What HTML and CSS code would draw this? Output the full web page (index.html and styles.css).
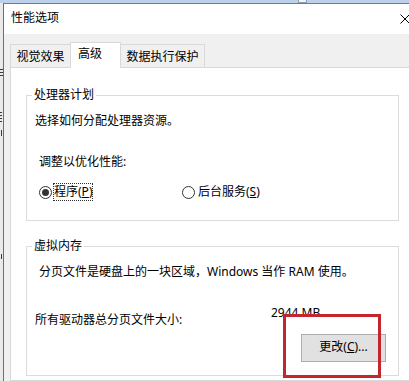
FILE: index.html
```html
<!DOCTYPE html>
<html lang="zh-CN">
<head>
<meta charset="utf-8">
<title>性能选项</title>
<link rel="stylesheet" href="styles.css">
</head>
<body>
<div class="desktop">
  <div class="bg-top"><span class="bg-thumb"></span></div>
  <div class="bg-row">
    <div class="bg-left">
      <span class="mark mark1"></span>
      <span class="mark mark2"></span>
      <span class="mark mark3"></span>
      <span class="mark mark4"></span>
    </div>
    <div class="dialog">
      <div class="titlebar">
        <span class="title">性能选项</span>
        <span class="close"><svg width="9" height="10" viewBox="0 0 9 10"><path d="M0.5 0.5L9.5 9.5M9.5 0.5L0.5 9.5" stroke="#000" stroke-width="1" fill="none"/></svg></span>
      </div>
      <div class="face">
        <div class="tabs">
          <div class="tab tab-first">视觉效果</div>
          <div class="tab tab-active">高级</div>
          <div class="tab tab-last">数据执行保护</div>
        </div>
        <div class="panel">
          <fieldset class="group group-cpu">
            <legend>处理器计划</legend>
            <p class="desc">选择如何分配处理器资源。</p>
            <p class="sub">调整以优化性能:</p>
            <div class="radios">
              <label class="radio-opt opt-program"><span class="radio checked"></span><span class="focus">程序(<u>P</u>)</span></label>
              <label class="radio-opt opt-service"><span class="radio"></span><span class="radio-text">后台服务(<u>S</u>)</span></label>
            </div>
          </fieldset>
          <fieldset class="group group-mem">
            <legend>虚拟内存</legend>
            <p class="desc2">分页文件是硬盘上的一块区域，Windows 当作 RAM 使用。</p>
            <div class="size-row"><span class="size-label">所有驱动器总分页文件大小:</span><span class="size-val">2944 MB</span></div>
            <div class="btn-row"><button class="btn">更改(<u>C</u>)...</button></div>
          </fieldset>
        </div>
      </div>
    </div>
  </div>
  <div class="highlight"></div>
</div>
</body>
</html>
```
FILE: styles.css
```css
* { box-sizing: border-box; }
html, body { margin: 0; padding: 0; }
body {
  width: 409px;
  height: 381px;
  overflow: hidden;
  background: #ececec;
  font-family: "Noto Sans", "Noto Sans CJK SC", sans-serif;
  font-size: 12px;
  line-height: 16px;
  color: #000;
}
.desktop { position: relative; width: 409px; height: 381px; overflow: hidden; }

.bg-top { height: 3px; background: #bcd0e9; display: flex; }
.bg-thumb { margin-left: 298px; width: 9px; height: 3px; background: #f2f4f7; border: 1px solid #8b9cb3; border-top: 0; }

.bg-row { display: flex; height: 378px; }
.bg-left { width: 3px; background: #eaeaea; display: flex; flex-direction: column; align-items: flex-start; }
.mark { display: block; background: #3a3a3a; }
.mark1 { width: 3px; height: 1px; margin-top: 66px; box-shadow: 0 3px 0 #3a3a3a, 0 6px 0 #3a3a3a; }
.mark2 { width: 2px; height: 1px; margin-top: 42px; box-shadow: 0 3px 0 #3a3a3a, 0 6px 0 #3a3a3a, 0 9px 0 #3a3a3a; }
.mark3 { width: 1px; height: 6px; margin-top: 17px; margin-left: 1px; }
.mark4 { width: 1px; height: 5px; margin-top: 118px; margin-left: 1px; }

.dialog {
  width: 406px;
  overflow: hidden;
  border-left: 1px solid #6e6e6e;
  border-top: 1px solid #6b7d96;
  background: #f0f0f0;
  display: flex;
  flex-direction: column;
}
.titlebar {
  height: 30px;
  background: #fff;
  display: flex;
  align-items: center;
  justify-content: space-between;
}
.title { padding-left: 7px; padding-bottom: 2px; }
.close { width: 9px; height: 30px; display: flex; align-items: center; }
.close svg { display: block; margin-top: -1px; }

.face { padding: 8px 0 0 6px; flex: 1; display: flex; flex-direction: column; }
.tabs { display: flex; align-items: flex-end; height: 25px; }
.tab {
  height: 23px;
  background: #f0f0f0;
  border-top: 1px solid #d9d9d9;
  display: flex;
  align-items: center;
  justify-content: center;
  padding-top: 1px;
}
.tab-first { width: 60px; border-left: 1px solid #d9d9d9; }
.tab-active {
  width: 51px;
  height: 26px;
  margin-bottom: -1px;
  background: #fff;
  border: 1px solid #d9d9d9;
  border-bottom: 0;
  position: relative;
  z-index: 1;
  align-items: flex-start;
  justify-content: flex-start;
  padding: 3px 0 0 7px;
}
.tab-last { width: 84px; border-right: 1px solid #d9d9d9; }

.panel {
  flex: 1;
  background: #fff;
  border: 1px solid #d9d9d9;
  border-right: 0;
  padding: 20px 0 0 15px;
}
.group {
  margin: 0;
  width: 373px;
  min-width: 0;
  border: 1px solid #dcdcdc;
  padding: 0 0 0 8px;
}
.group legend { padding: 0 2px; margin-left: -3px; line-height: 14px; }
.group-cpu { padding-bottom: 19px; }
.group-mem { margin-top: 18px; padding-bottom: 13px; }

p { margin: 0; }
.desc { margin-top: 11px; }
.sub { margin-top: 25px; margin-left: 4px; }
.radios { display: flex; align-items: center; margin-top: 13px; height: 18px; }
.radio-opt { display: flex; align-items: center; }
.opt-program { width: 143px; margin-left: 4px; }
.radio {
  width: 13px;
  height: 13px;
  border: 1px solid #333;
  border-radius: 50%;
  display: flex;
  align-items: center;
  justify-content: center;
  flex: none;
}
.radio.checked::after {
  content: "";
  width: 7px;
  height: 7px;
  border-radius: 50%;
  background: #333;
}
.focus { margin-left: 1px; border: 1px dotted #333; height: 18px; }
.radio-text { margin-left: 3px; }

.desc2 { margin-top: 11px; margin-left: 4px; }
.size-row { display: flex; align-items: flex-start; margin-top: 32px; }
.size-label { width: 236px; }
.size-val { margin-top: -7px; }
.btn-row { display: flex; justify-content: flex-end; padding-right: 12px; margin-top: 6px; }
.btn {
  width: 85px;
  height: 28px;
  margin: 0;
  padding: 0 0 2px;
  background: #e1e1e1;
  border: 1px solid #adadad;
  font: inherit;
  color: #000;
}

.highlight {
  position: absolute;
  left: 283px;
  top: 314px;
  width: 98px;
  height: 64px;
  border: 3px solid #c3262e;
}
```
